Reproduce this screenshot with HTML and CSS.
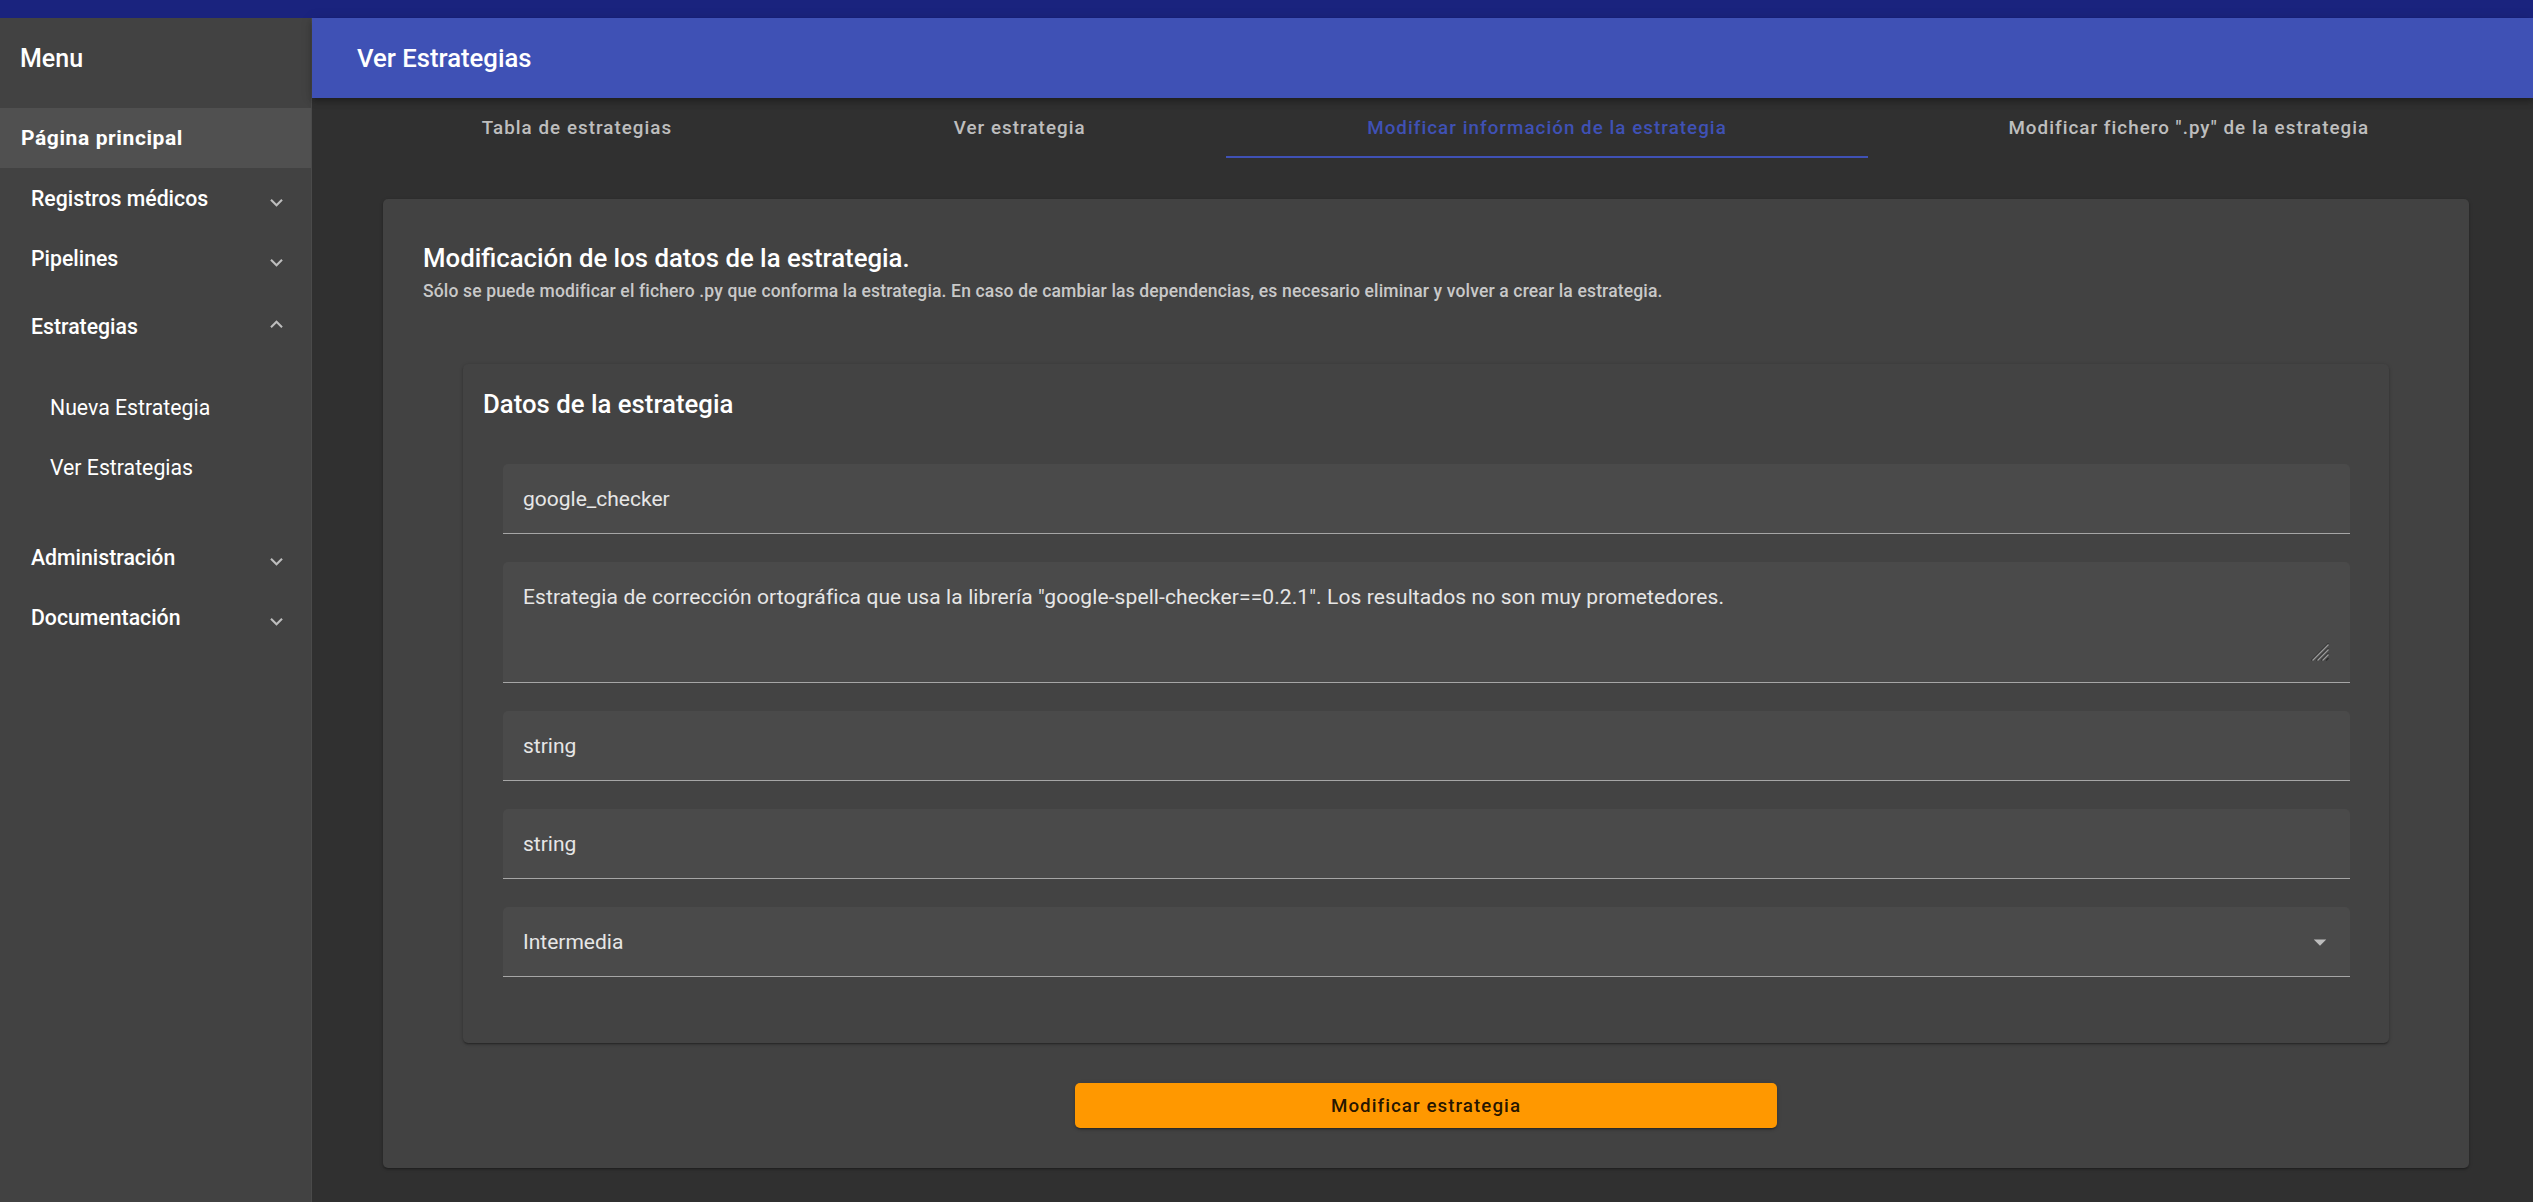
FILE: index.html
```html
<!DOCTYPE html>
<html lang="es">
<head>
<meta charset="utf-8">
<title>Ver Estrategias</title>
<link rel="stylesheet" href="styles.css">
</head>
<body>
<div class="topbar"></div>
<div class="layout">
  <aside class="sidebar">
    <div class="menu-head">Menu</div>
    <div class="home">Página principal</div>
    <div class="item"><span>Registros médicos</span>
      <svg class="chev down" viewBox="0 0 24 24"><path d="M16.59 8.59L12 13.17 7.41 8.59 6 10l6 6 6-6z"/></svg></div>
    <div class="item"><span>Pipelines</span>
      <svg class="chev down" viewBox="0 0 24 24"><path d="M16.59 8.59L12 13.17 7.41 8.59 6 10l6 6 6-6z"/></svg></div>
    <div class="item open"><span>Estrategias</span>
      <svg class="chev up" viewBox="0 0 24 24"><path d="M12 8l-6 6 1.41 1.41L12 10.83l4.59 4.58L18 14z"/></svg></div>
    <div class="sub">
      <div class="subitem">Nueva Estrategia</div>
      <div class="subitem">Ver Estrategias</div>
    </div>
    <div class="item"><span>Administración</span>
      <svg class="chev down" viewBox="0 0 24 24"><path d="M16.59 8.59L12 13.17 7.41 8.59 6 10l6 6 6-6z"/></svg></div>
    <div class="item"><span>Documentación</span>
      <svg class="chev down" viewBox="0 0 24 24"><path d="M16.59 8.59L12 13.17 7.41 8.59 6 10l6 6 6-6z"/></svg></div>
  </aside>
  <main class="main">
    <header class="appbar">Ver Estrategias</header>
    <nav class="tabs">
      <div class="tab">Tabla de estrategias</div>
      <div class="tab">Ver estrategia</div>
      <div class="tab active">Modificar información de la estrategia</div>
      <div class="tab">Modificar fichero ".py" de la estrategia</div>
    </nav>
    <section class="card">
      <h1 class="card-title">Modificación de los datos de la estrategia.</h1>
      <p class="card-sub">Sólo se puede modificar el fichero .py que conforma la estrategia. En caso de cambiar las dependencias, es necesario eliminar y volver a crear la estrategia.</p>
      <div class="inner">
        <h2 class="inner-title">Datos de la estrategia</h2>
        <div class="fields">
          <div class="field">google_checker</div>
          <div class="field multi"><textarea class="ta" readonly>Estrategia de corrección ortográfica que usa la librería "google-spell-checker==0.2.1". Los resultados no son muy prometedores.</textarea>
            <svg class="grip" viewBox="0 0 18 18">
              <g stroke-width="1.2">
                <line x1="0.5" y1="17.5" x2="17.5" y2="0.5" stroke="#2a2a2a"/>
                <line x1="1.5" y1="17.5" x2="17.5" y2="1.5" stroke="#9a9a9a"/>
                <line x1="5.5" y1="17.5" x2="17.5" y2="5.5" stroke="#2a2a2a"/>
                <line x1="6.5" y1="17.5" x2="17.5" y2="6.5" stroke="#9a9a9a"/>
                <line x1="10.5" y1="17.5" x2="17.5" y2="10.5" stroke="#2a2a2a"/>
                <line x1="11.5" y1="17.5" x2="17.5" y2="11.5" stroke="#9a9a9a"/>
                <line x1="15" y1="17.5" x2="17.5" y2="15" stroke="#2a2a2a"/>
              </g>
            </svg>
          </div>
          <div class="field">string</div>
          <div class="field">string</div>
          <div class="field select"><span>Intermedia</span>
            <svg class="arrow" viewBox="0 0 24 24"><path d="M7 10l5 5 5-5z"/></svg></div>
        </div>
      </div>
      <div class="actions">
        <button class="btn" type="button">Modificar estrategia</button>
      </div>
    </section>
  </main>
</div>
</body>
</html>
```
FILE: styles.css
```css
* { box-sizing: border-box; }
html, body { margin: 0; padding: 0; }
body {
  background: #303030;
  font-family: Roboto, "Noto Sans", "Liberation Sans", sans-serif;
  color: #fff;
  width: 2533px;
  height: 1202px;
  overflow: hidden;
}
.topbar { height: 18px; background: #1a237e; }
.layout { display: flex; height: 1184px; }

.sidebar {
  width: 312px;
  flex: none;
  background: #424242;
  border-right: 1px solid #4a4a4a;
}
.menu-head {
  height: 80px;
  margin-bottom: 10px;
  display: flex;
  align-items: center;
  padding-left: 20px;
  font-size: 25px;
  font-weight: 500;
}
.home {
  height: 60px;
  display: flex;
  align-items: center;
  padding-left: 21px;
  background: #505050;
  font-size: 21px;
  font-weight: 700;
  letter-spacing: 0.6px;
}
.item {
  height: 60px;
  display: flex;
  align-items: center;
  justify-content: space-between;
  padding: 0 22px 0 31px;
  font-size: 21.25px;
  font-weight: 500;
}
.item.open { margin-top: 8px; }
.chev { width: 25px; height: 25px; fill: #bdbdbd; flex: none; }
.chev.down { transform: translateY(4px); }
.chev.up { transform: translateY(-2px); }
.sub { padding: 21px 0 30px; }
.subitem {
  height: 60px;
  display: flex;
  align-items: center;
  padding-left: 50px;
  font-size: 21.25px;
  font-weight: 400;
}

.main { flex: 1; display: flex; flex-direction: column; min-width: 0; }
.appbar {
  height: 80px;
  flex: none;
  background: #3f51b5;
  display: flex;
  align-items: center;
  padding-left: 45px;
  font-size: 25.7px;
  font-weight: 500;
  box-shadow: 0 2.5px 5px -1px rgba(0,0,0,.2), 0 5px 6px 0 rgba(0,0,0,.14), 0 1px 12px 0 rgba(0,0,0,.12);
  position: relative;
  z-index: 1;
}
.tabs {
  height: 60px;
  display: flex;
  padding: 0 23px 0 29px;
}
.tab {
  flex: 1 1 auto;
  display: flex;
  align-items: center;
  justify-content: center;
  font-size: 18.75px;
  font-weight: 500;
  letter-spacing: 1.05px;
  color: rgba(255,255,255,0.7);
  white-space: nowrap;
  border-bottom: 2px solid transparent;
  padding-top: 2px;
}
.tab.active { color: #3f51b5; border-bottom-color: #3f51b5; }

.card {
  margin: 41px 64px 0 71px;
  height: 969px;
  background: #424242;
  border-radius: 5px;
  padding: 44px 40px 0;
  box-shadow: 0 2px 2px -1px rgba(0,0,0,.2), 0 1px 2px rgba(0,0,0,.14), 0 1px 4px rgba(0,0,0,.12);
}
.card-title {
  margin: 0;
  font-size: 25.75px;
  line-height: 30px;
  font-weight: 500;
}
.card-sub {
  margin: 6px 0 0;
  font-size: 17.5px;
  line-height: 24px;
  font-weight: 500;
  letter-spacing: 0.15px;
  color: rgba(255,255,255,0.72);
}
.inner {
  margin: 61px 40px 0;
  height: 679px;
  background: #434343;
  border-radius: 5px;
  padding: 25px 0 0;
  box-shadow: 0 2px 2px -1px rgba(0,0,0,.25), 0 1px 2px rgba(0,0,0,.16), 0 1px 4px rgba(0,0,0,.14);
}
.inner-title {
  margin: 0;
  padding-left: 20px;
  font-size: 25.75px;
  line-height: 30px;
  font-weight: 500;
}
.fields {
  display: flex;
  flex-direction: column;
  gap: 28px;
  padding: 0 39px 0 40px;
  margin-top: 45px;
}
.field {
  height: 70px;
  background: #4a4a4a;
  border-radius: 5px 5px 0 0;
  border-bottom: 1px solid #a6a6a6;
  display: flex;
  align-items: center;
  padding: 0 20px;
  font-size: 21px;
  color: #e6e6e6;
}
.field.multi {
  position: relative;
  height: 121px;
  align-items: flex-start;
  padding: 23px 20px 0;
}
.ta {
  width: 100%;
  height: 77px;
  margin: 0;
  padding: 0;
  border: 0;
  outline: none;
  background: transparent;
  color: #e6e6e6;
  font-family: Roboto, "Noto Sans", "Liberation Sans", sans-serif;
  font-size: 21px;
  line-height: 24px;
  letter-spacing: 0.1px;
  resize: none;
}
.grip {
  position: absolute;
  right: 21px;
  bottom: 21px;
  width: 18px;
  height: 18px;
}
.field.select { justify-content: space-between; padding-right: 15px; }
.arrow { width: 30px; height: 30px; fill: #bdbdbd; }

.actions { display: flex; justify-content: center; margin-top: 40px; }
.btn {
  width: 702px;
  height: 45px;
  border: 0;
  border-radius: 5px;
  background: #ff9800;
  color: rgba(0,0,0,0.87);
  font-family: Roboto, "Noto Sans", "Liberation Sans", sans-serif;
  font-size: 18.75px;
  font-weight: 500;
  letter-spacing: 1.05px;
  box-shadow: 0 3px 1px -2px rgba(0,0,0,.2), 0 2px 2px rgba(0,0,0,.14), 0 1px 5px rgba(0,0,0,.12);
}
```
